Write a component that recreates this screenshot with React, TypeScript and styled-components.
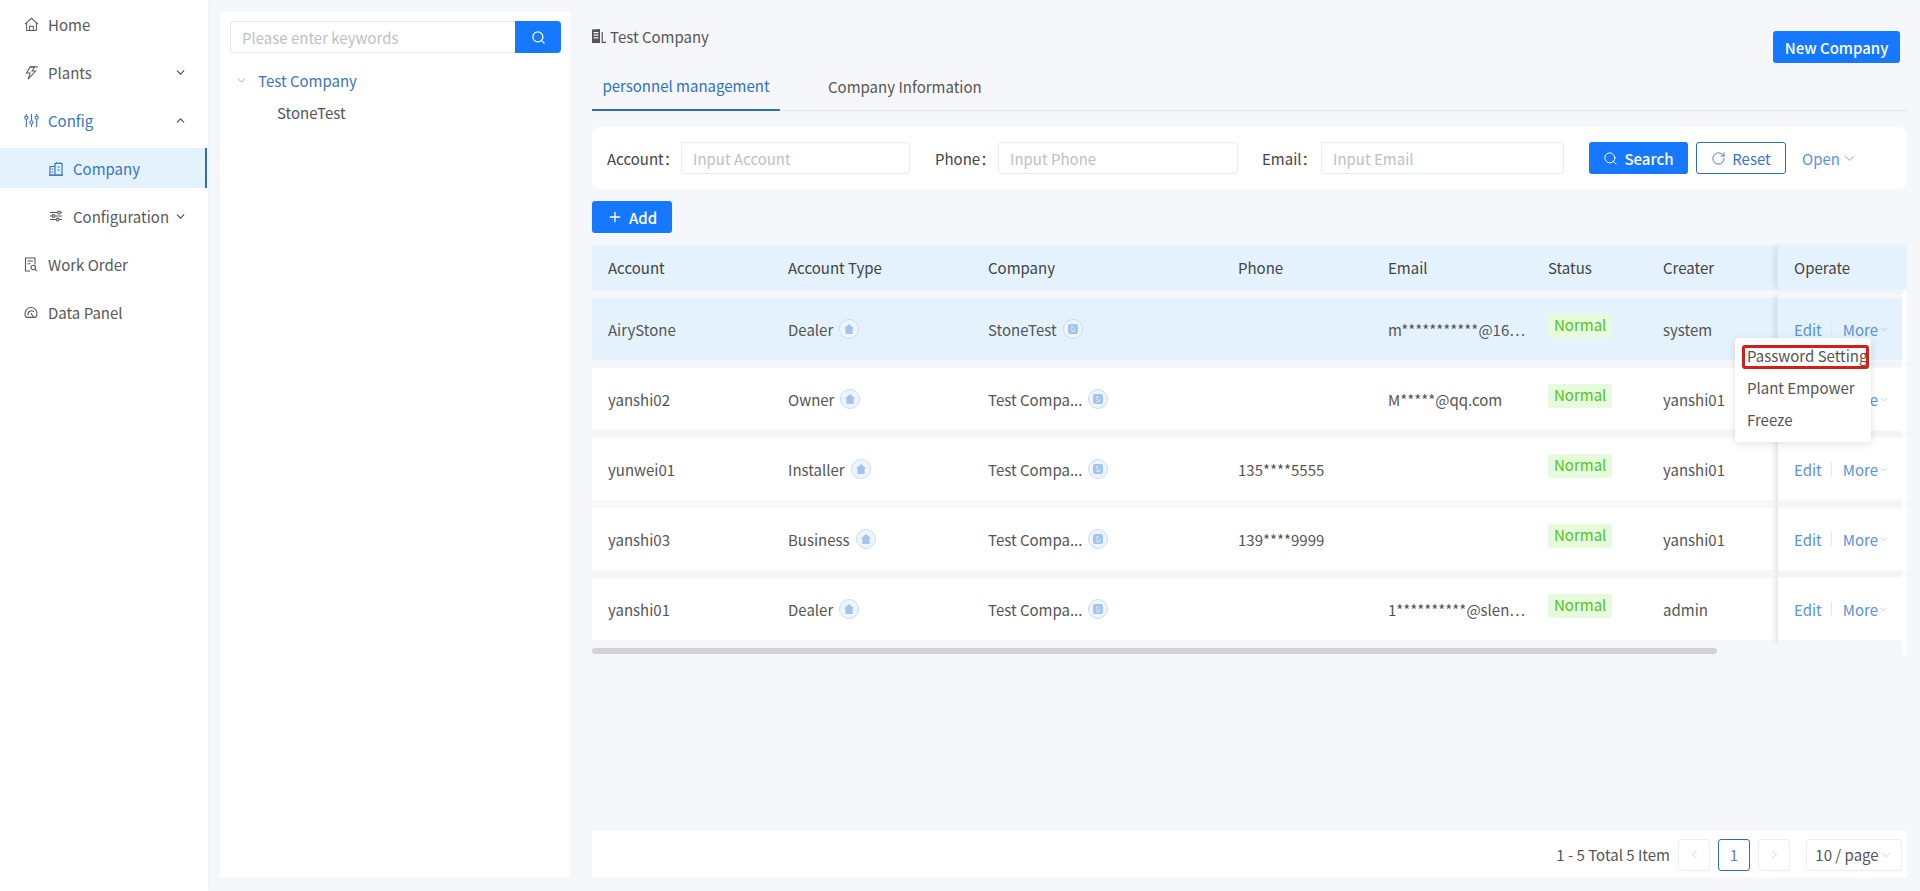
import { ReactNode } from "react";
import styled, { createGlobalStyle } from "styled-components";
import { ChevronDown, ChevronLeft, ChevronRight, ChevronUp, Plus, RotateCw, Search } from "lucide-react";

const GlobalStyle = createGlobalStyle`
  html, body {
    margin: 0;
    padding: 0;
    height: 100%;
    background: #f5f7fa;
    font-family: "Noto Sans CJK SC", "Noto Sans", sans-serif;
    font-size: 14px;
    color: #555;
  }
  * { box-sizing: border-box; }
  input::placeholder { color: #bfbfbf; }
`;

// nav icons, drawn by hand since the packages have nothing close enough
const HomeIcon = () => (
  <svg width="15" height="15" viewBox="0 0 16 16" fill="none" stroke="currentColor" strokeWidth="1.1">
    <path d="M1 7.6 8 1.4l7 6.2" />
    <path d="M2.8 6.4v8h10.4v-8" />
    <path d="M6 14.4V9.8h4v4.6" />
  </svg>
);
const BoltIcon = () => (
  <svg width="15" height="15" viewBox="0 0 16 16" fill="none" stroke="currentColor" strokeWidth="1.1">
    <path d="M6.5 2 2.6 8.6h4L4.4 15l8-8.6H8.6l3-4.4z" />
    <path d="M7 2h8" />
  </svg>
);
const TunerIcon = () => (
  <svg width="15" height="15" viewBox="0 0 16 16" fill="none" stroke="currentColor" strokeWidth="1.2">
    <path d="M2.5 1v2M2.5 7v8M8 1v7M8 12v3M13.5 1v2M13.5 7v8" />
    <circle cx="2.5" cy="5" r="1.7" />
    <circle cx="8" cy="10" r="1.7" />
    <circle cx="13.5" cy="5" r="1.7" />
  </svg>
);
const CompanyIcon = () => (
  <svg width="14" height="15" viewBox="0 0 14 15" fill="none" stroke="currentColor" strokeWidth="1.2">
    <path d="M1 14V5.5h5V14zM6 14V2.5h7V14z" />
    <path d="M7.5 1v1.5M11 1v1.5M2.6 8h1.8M2.6 11h1.8M8.4 6h2.4M8.4 9h2.4" />
    <path d="M0 14.3h14" />
  </svg>
);
const SettingsIcon = () => (
  <svg width="14" height="14" viewBox="0 0 14 14" fill="none" stroke="currentColor" strokeWidth="1.1">
    <path d="M1 3.5h7.5M11.5 3.5H13M1 7h2M6 7h7M1 10.5h6M10 10.5h3" />
    <circle cx="10" cy="3.5" r="1.4" />
    <circle cx="4.5" cy="7" r="1.4" />
    <circle cx="8.5" cy="10.5" r="1.4" />
  </svg>
);
const OrderIcon = () => (
  <svg width="14" height="15" viewBox="0 0 14 15" fill="none" stroke="currentColor" strokeWidth="1.1">
    <path d="M6 14H1.5V1h9.5v6.5" />
    <path d="M3.5 4h5.5M3.5 6.8h3" />
    <circle cx="9.3" cy="10.5" r="2.2" />
    <path d="m11 12.2 2 2" />
  </svg>
);
const GaugeIcon = () => (
  <svg width="14" height="14" viewBox="0 0 14 14" fill="none" stroke="currentColor" strokeWidth="1.1">
    <path d="M2.4 12.4a6 6 0 1 1 9.2 0z" />
    <path d="M4 10.2a3.6 3.6 0 0 1 6-3.4M7 8.4l2.6 3.6" />
  </svg>
);
const TowerIcon = () => (
  <svg width="14" height="14" viewBox="0 0 14 14" fill="#555">
    <path d="M0 0.5 8 0v14H0zM1.6 3v1.2h4.8V3zm0 2.6v1.2h4.8V5.6zm0 2.6v1.2h4.8V8.2z" />
    <path d="M9.6 3h1.2v9.8H14V14H9.6z" />
  </svg>
);

const RoleBadge = () => (
  <Badge>
    <svg width="12" height="12" viewBox="0 0 12 12" fill="#a3c4ee">
      <path d="M6 1 .8 5.6h1.6V11h7.2V5.6h1.6z" />
    </svg>
  </Badge>
);
const OrgBadge = () => (
  <Badge>
    <svg width="12" height="12" viewBox="0 0 12 12">
      <rect x="1" y="1" width="10" height="10" rx="2" fill="#a3c4ee" />
      <path d="M4 4h2.5M4 6.2h1.5M8 6l-1 2.5H4.5" stroke="#e8f2fc" strokeWidth="1" fill="none" />
    </svg>
  </Badge>
);

interface NavItemProps {
  icon: ReactNode;
  label: string;
  chevron?: "up" | "down";
  active?: boolean;
  sub?: boolean;
  open?: boolean;
}

const NavItem = ({ icon, label, chevron, active, sub, open }: NavItemProps) => (
  <NavRow $active={active} $sub={sub} $open={open}>
    <NavIcon>{icon}</NavIcon>
    <NavLabel>{label}</NavLabel>
    {chevron === "down" && <NavChevron><ChevronDown size={13} strokeWidth={2.4} /></NavChevron>}
    {chevron === "up" && <NavChevron><ChevronUp size={13} strokeWidth={2.4} /></NavChevron>}
  </NavRow>
);

const rows = [
  { account: "AiryStone", type: "Dealer", company: "StoneTest", phone: "", email: "m***********@16\u22EF", creater: "system", selected: true },
  { account: "yanshi02", type: "Owner", company: "Test Compa...", phone: "", email: "M*****@qq.com", creater: "yanshi01" },
  { account: "yunwei01", type: "Installer", company: "Test Compa...", phone: "135****5555", email: "", creater: "yanshi01" },
  { account: "yanshi03", type: "Business", company: "Test Compa...", phone: "139****9999", email: "", creater: "yanshi01" },
  { account: "yanshi01", type: "Dealer", company: "Test Compa...", phone: "", email: "1**********@slen\u22EF", creater: "admin" },
];

const App = () => {
  return (
    <Page>
      <GlobalStyle />
      <Sidebar>
        <NavItem icon={<HomeIcon />} label="Home" />
        <NavItem icon={<BoltIcon />} label="Plants" chevron="down" />
        <NavItem icon={<TunerIcon />} label="Config" chevron="up" open />
        <NavItem icon={<CompanyIcon />} label="Company" sub active />
        <NavItem icon={<SettingsIcon />} label="Configuration" sub chevron="down" />
        <NavItem icon={<OrderIcon />} label="Work Order" />
        <NavItem icon={<GaugeIcon />} label="Data Panel" />
      </Sidebar>

      <TreePanel>
        <TreeSearch>
          <TreeInput placeholder="Please enter keywords" />
          <TreeSearchButton><Search size={15} /></TreeSearchButton>
        </TreeSearch>
        <TreeRoot>
          <ChevronDown size={13} strokeWidth={1.4} />
          <span>Test Company</span>
        </TreeRoot>
        <TreeLeaf>StoneTest</TreeLeaf>
      </TreePanel>

      <Main>
        <TitleRow>
          <Title><TowerIcon /> Test Company</Title>
          <PrimaryButton $width={127}>New Company</PrimaryButton>
        </TitleRow>

        <Tabs>
          <Tab $active>personnel management</Tab>
          <Tab>Company Information</Tab>
        </Tabs>

        <FilterCard>
          <FieldLabel $width={74}>Account：</FieldLabel>
          <FilterInput $width={229} placeholder="Input Account" />
          <FieldLabel $width={63} $left={25}>Phone：</FieldLabel>
          <FilterInput $width={240} placeholder="Input Phone" />
          <FieldLabel $width={59} $left={24}>Email：</FieldLabel>
          <FilterInput $width={243} placeholder="Input Email" />
          <PrimaryButton $width={99} $left={25}><Search size={15} strokeWidth={1.6} /> Search</PrimaryButton>
          <OutlineButton><RotateCw size={15} strokeWidth={1.5} /> Reset</OutlineButton>
          <OpenLink>Open <ChevronDown size={15} strokeWidth={1.3} /></OpenLink>
        </FilterCard>

        <AddRow>
          <PrimaryButton $width={80}><Plus size={16} strokeWidth={2} /> Add</PrimaryButton>
        </AddRow>

        <TableWrap>
          <HeadRow>
            <span>Account</span>
            <span>Account Type</span>
            <span>Company</span>
            <span>Phone</span>
            <span>Email</span>
            <span>Status</span>
            <span>Creater</span>
            <OperateCell $head>Operate</OperateCell>
          </HeadRow>
          {rows.map((row, index) => (
            <BodyRow key={index} $selected={row.selected}>
              <span>{row.account}</span>
              <Inline>{row.type}<RoleBadge /></Inline>
              <Inline>{row.company}<OrgBadge /></Inline>
              <span>{row.phone}</span>
              <span>{row.email}</span>
              <span><StatusTag>Normal</StatusTag></span>
              <span>{row.creater}</span>
              <OperateCell $selected={row.selected}>
                <ActionLink>Edit</ActionLink>
                <ActionDivider />
                <ActionLink>More</ActionLink>
                <ChevronDown size={11} strokeWidth={1.3} color="#8fb4e4" />
              </OperateCell>
            </BodyRow>
          ))}
          <ScrollTrack><ScrollThumb /></ScrollTrack>

          <MoreMenu>
            <MenuItem $marked>Password Setting</MenuItem>
            <MenuItem>Plant Empower</MenuItem>
            <MenuItem>Freeze</MenuItem>
          </MoreMenu>
        </TableWrap>

        <Pagination>
          <PageTotal>1 - 5 Total 5 Item</PageTotal>
          <PageButton><ChevronLeft size={15} strokeWidth={1.2} color="#c4c4c4" /></PageButton>
          <PageButton $current>1</PageButton>
          <PageButton><ChevronRight size={15} strokeWidth={1.2} color="#c4c4c4" /></PageButton>
          <PageSelect>10 / page<ChevronDown size={14} strokeWidth={1} color="#bbb" /></PageSelect>
        </Pagination>
      </Main>
    </Page>
  );
};

const Page = styled.div`
  display: flex;
  height: 100vh;
  overflow: hidden;
`;

const Sidebar = styled.nav`
  flex: 0 0 208px;
  background: #fff;
  box-shadow: 1px 0 4px rgba(0, 0, 0, 0.03);
`;

const NavRow = styled.div<{ $active?: boolean; $sub?: boolean; $open?: boolean }>`
  display: flex;
  align-items: center;
  height: 48px;
  padding: 0 20px 0 ${(p) => (p.$sub ? "49px" : "24px")};
  margin-right: 1px;
  color: ${(p) => (p.$active || p.$open ? "#3a75c4" : "#595959")};

  ${(p) =>
    p.$active &&
    `
    height: 40px;
    margin: 4px 1px 4px 0;
    background: #e3f2fd;
    border-right: 2px solid #2f6fa8;
  `}
`;

const NavIcon = styled.span`
  display: flex;
  flex: 0 0 15px;
  margin-right: 9px;
`;

const NavLabel = styled.span`
  flex: 1;
  font-size: 15px;
  white-space: nowrap;
`;

const NavChevron = styled.span`
  display: flex;
  color: #555;
`;

const TreePanel = styled.aside`
  flex: 0 0 350px;
  margin: 12px 0 13px 12px;
  padding: 9px 9px 0 10px;
  background: #fff;
`;

const TreeSearch = styled.div`
  display: flex;
  height: 32px;
`;

const TreeInput = styled.input`
  flex: 1;
  min-width: 0;
  padding: 0 11px;
  border: 1px solid #e8e8e8;
  border-right: 0;
  border-radius: 4px 0 0 4px;
  outline: 0;
  font: inherit;
  font-size: 15px;
`;

const TreeSearchButton = styled.button`
  display: flex;
  flex: 0 0 46px;
  align-items: center;
  justify-content: center;
  border: 0;
  border-radius: 0 4px 4px 0;
  background: #1677ff;
  color: #fff;
`;

const TreeRoot = styled.div`
  display: flex;
  align-items: center;
  gap: 10px;
  height: 32px;
  margin-top: 11px;
  padding-left: 5px;
  font-size: 15px;
  color: #3a75c4;

  svg { color: #6f93c4; }
`;

const TreeLeaf = styled.div`
  display: flex;
  align-items: center;
  height: 32px;
  padding-left: 47px;
  font-size: 15px;
  color: #555;
`;

const Main = styled.main`
  flex: 1;
  min-width: 0;
  display: flex;
  flex-direction: column;
  margin: 0 13px 13px 22px;
`;

const TitleRow = styled.div`
  display: flex;
  justify-content: space-between;
  align-items: center;
  padding: 31px 7px 0 0;
  height: 63px;
`;

const Title = styled.div`
  display: flex;
  align-items: center;
  gap: 4px;
  margin-top: -22px;
  font-size: 15px;
  color: #555;
`;

const Tabs = styled.div`
  display: flex;
  height: 48px;
  border-bottom: 1px solid #e3e5e8;
`;

const Tab = styled.div<{ $active?: boolean }>`
  display: flex;
  align-items: center;
  justify-content: center;
  height: 48px;
  width: ${(p) => (p.$active ? "188px" : "auto")};
  margin-right: ${(p) => (p.$active ? "48px" : "0")};
  font-size: 15px;
  color: ${(p) => (p.$active ? "#2f72c4" : "#555")};
  border-bottom: ${(p) => (p.$active ? "2px solid #2f6fa8" : "0")};
  padding-bottom: 2px;
`;

const FilterCard = styled.div`
  display: flex;
  align-items: center;
  height: 62px;
  margin-top: 16px;
  padding-left: 15px;
  background: #fff;
  border-radius: 8px;
`;

const FieldLabel = styled.label<{ $width: number; $left?: number }>`
  flex: 0 0 ${(p) => p.$width}px;
  margin-left: ${(p) => p.$left ?? 0}px;
  font-size: 15px;
  color: #444;
  white-space: nowrap;
`;

const FilterInput = styled.input<{ $width: number }>`
  flex: 0 0 ${(p) => p.$width}px;
  height: 32px;
  padding: 0 11px;
  border: 1px solid #ececec;
  border-radius: 3px;
  outline: 0;
  font: inherit;
  font-size: 15px;
`;

const PrimaryButton = styled.button<{ $width: number; $left?: number }>`
  display: inline-flex;
  align-items: center;
  justify-content: center;
  gap: 6px;
  flex: 0 0 ${(p) => p.$width}px;
  width: ${(p) => p.$width}px;
  height: 32px;
  margin-left: ${(p) => p.$left ?? 0}px;
  padding: 0;
  border: 0;
  border-radius: 3px;
  background: #1677ff;
  color: #fff;
  font: inherit;
  font-size: 15px;
  font-weight: 500;
`;

const OutlineButton = styled.button`
  display: inline-flex;
  align-items: center;
  justify-content: center;
  gap: 6px;
  flex: 0 0 90px;
  height: 32px;
  margin-left: 8px;
  padding: 0;
  border: 1px solid #2f6fa8;
  border-radius: 3px;
  background: #fff;
  color: #3a75c4;
  font: inherit;
  font-size: 15px;
`;

const OpenLink = styled.span`
  display: inline-flex;
  align-items: center;
  gap: 2px;
  margin-left: 16px;
  font-size: 15px;
  color: #5a92dc;
`;

const AddRow = styled.div`
  display: flex;
  margin: 12px 0;
`;

const TableWrap = styled.div`
  position: relative;
  flex: 0 0 402px;
  background: linear-gradient(to left, #fff 5px, transparent 5px);
`;

const columns = "180px 200px 250px 150px 160px 115px 114px 141px";

const HeadRow = styled.div`
  display: grid;
  grid-template-columns: ${columns} 5px;
  align-items: center;
  height: 45px;
  padding-left: 16px;
  background: #e3f2fd;
  border-radius: 4px 4px 0 0;
  color: #444;
  font-size: 15px;
  white-space: nowrap;
`;

const BodyRow = styled.div<{ $selected?: boolean }>`
  display: grid;
  grid-template-columns: ${columns};
  align-items: center;
  height: 62px;
  margin: 8px 5px 8px 0;
  padding-left: 16px;
  background: ${(p) => (p.$selected ? "#e3f2fd" : "#fff")};
  font-size: 15px;
  color: #555;
  white-space: nowrap;

  & + & { margin-top: 8px; }
  &:last-of-type { margin-bottom: 0; }
`;

const Inline = styled.span`
  display: inline-flex;
  align-items: center;
  gap: 6px;
`;

const Badge = styled.span`
  display: inline-flex;
  align-items: center;
  justify-content: center;
  width: 20px;
  height: 20px;
  border: 1px solid #c8dcf3;
  border-radius: 50%;
  background: #eef5fd;
`;

const StatusTag = styled.span`
  display: inline-block;
  position: relative;
  top: -3px;
  height: 24px;
  padding: 0 6px;
  line-height: 22px;
  border-radius: 3px;
  background: #e6fbdc;
  color: #52c41a;
  font-size: 15px;
`;

const OperateCell = styled.span<{ $head?: boolean; $selected?: boolean }>`
  display: flex;
  align-items: center;
  height: ${(p) => (p.$head ? "45px" : "70px")};
  margin: ${(p) => (p.$head ? "0" : "-4px 0")};
  padding-left: 16px;
  border-left: 1px solid #e6e9ec;
  box-shadow: -4px 0 5px -2px rgba(0, 0, 0, 0.1);
  color: inherit;
`;

const ActionLink = styled.span`
  color: #5a92dc;
`;

const ActionDivider = styled.span`
  width: 1px;
  height: 14px;
  margin: 0 11px 0 9px;
  background: #e6e6e6;
`;

const ScrollTrack = styled.div`
  height: 7px;
  margin-right: 5px;
`;

const ScrollThumb = styled.div`
  width: 1125px;
  height: 6px;
  border-radius: 3px;
  background: #d2d2d2;
`;

const MoreMenu = styled.div`
  position: absolute;
  top: 93px;
  left: 1143px;
  width: 136px;
  height: 104px;
  padding: 7px 0 0;
  background: #fff;
  border-radius: 4px;
  box-shadow: 0 2px 8px rgba(0, 0, 0, 0.12);
`;

const MenuItem = styled.div<{ $marked?: boolean }>`
  height: 24px;
  margin: 0 2px 8px 7px;
  padding-left: 5px;
  line-height: 22px;
  font-size: 15px;
  color: #555;
  white-space: nowrap;

  ${(p) =>
    p.$marked &&
    `
    outline: 3px solid #d0201a;
    outline-offset: -3px;
    border-radius: 3px;
  `}
`;

const Pagination = styled.div`
  display: flex;
  align-items: center;
  justify-content: flex-end;
  margin-top: auto;
  height: 47px;
  padding-right: 5px;
  background: #fff;
`;

const PageTotal = styled.span`
  margin-right: 8px;
  font-size: 15px;
  color: #555;
`;

const PageButton = styled.span<{ $current?: boolean }>`
  display: flex;
  align-items: center;
  justify-content: center;
  width: 32px;
  height: 32px;
  margin-right: 8px;
  border: 1px solid ${(p) => (p.$current ? "#2f6fa8" : "#eeeeee")};
  border-radius: 3px;
  color: #5a80c8;
  font-size: 15px;
`;

const PageSelect = styled.span`
  display: flex;
  align-items: center;
  justify-content: center;
  width: 96px;
  height: 32px;
  margin-left: 8px;
  border: 1px solid #eeeeee;
  border-radius: 3px;
  font-size: 15px;
  color: #555;
`;

export default App;
